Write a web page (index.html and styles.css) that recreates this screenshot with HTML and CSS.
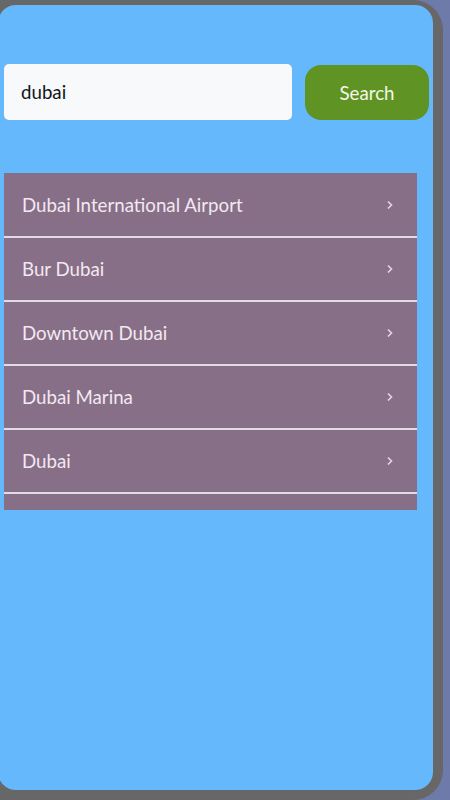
FILE: index.html
```html
<!DOCTYPE html>
<html lang="en">
<head>
    <meta charset="UTF-8">
    <meta name="viewport" content="width=device-width, initial-scale=1.0">
    <title>Search places</title>
    <link rel="stylesheet" href="styles.css">
</head>
<body>
    <div class="frame">
        <div class="screen">
            <form class="search-row" name="searchform" onsubmit="return false">
                <input class="search-input" type="text" name="query" value="dubai">
                <button class="search-button" type="submit">Search</button>
            </form>
            <ul class="results">
                <li class="result"><span>Dubai International Airport</span><svg class="chevron" width="8" height="10" viewBox="0 0 8 10"><polyline points="2,1.5 5.5,5 2,8.5"/></svg></li>
                <li class="result"><span>Bur Dubai</span><svg class="chevron" width="8" height="10" viewBox="0 0 8 10"><polyline points="2,1.5 5.5,5 2,8.5"/></svg></li>
                <li class="result"><span>Downtown Dubai</span><svg class="chevron" width="8" height="10" viewBox="0 0 8 10"><polyline points="2,1.5 5.5,5 2,8.5"/></svg></li>
                <li class="result"><span>Dubai Marina</span><svg class="chevron" width="8" height="10" viewBox="0 0 8 10"><polyline points="2,1.5 5.5,5 2,8.5"/></svg></li>
                <li class="result"><span>Dubai</span><svg class="chevron" width="8" height="10" viewBox="0 0 8 10"><polyline points="2,1.5 5.5,5 2,8.5"/></svg></li>
            </ul>
        </div>
    </div>
</body>
</html>
```
FILE: styles.css
```css
body{
    margin: 0;
    height: 800px;
    overflow: hidden;
    background-color: rgb(110, 122, 170);
    font-family: "Lato", "Open Sans", sans-serif;
}
.frame{
    box-sizing: border-box;
    width: 453px;
    height: 800px;
    margin-left: -10px;
    padding: 5px 10px 10px 8px;
    background-color: rgb(103, 103, 103);
    border-radius: 0 30px 30px 0;
}
.screen{
    box-sizing: border-box;
    height: 100%;
    padding: 59px 4px 0 6px;
    background-color: rgb(102, 184, 252);
    border-radius: 18px;
}
.search-row{
    display: flex;
    gap: 13px;
    margin: 0;
}
.search-input{
    box-sizing: border-box;
    width: 288px;
    height: 56px;
    padding: 0 17px;
    border: none;
    border-radius: 5px;
    background-color: rgb(247, 249, 251);
    color: rgb(20, 20, 25);
    font-family: inherit;
    font-size: 18.7px;
    outline: none;
}
.search-button{
    width: 124px;
    height: 55px;
    margin-top: 1px;
    border: none;
    border-radius: 16px;
    background-color: rgb(95, 148, 37);
    color: rgb(244, 248, 232);
    font-family: inherit;
    font-size: 18.7px;
}
.results{
    width: 413px;
    margin: 53px 0 0;
    padding: 1px 0 16px;
    list-style: none;
    background-color: rgb(135, 111, 136);
}
.result{
    display: flex;
    align-items: center;
    justify-content: space-between;
    height: 62px;
    padding: 0 23px 0 18px;
    border-bottom: 2px solid rgb(226, 218, 228);
    color: rgb(243, 232, 240);
    font-size: 18.7px;
}
.chevron{
    fill: none;
    stroke: rgb(225, 215, 225);
    stroke-width: 1.6;
}
```
